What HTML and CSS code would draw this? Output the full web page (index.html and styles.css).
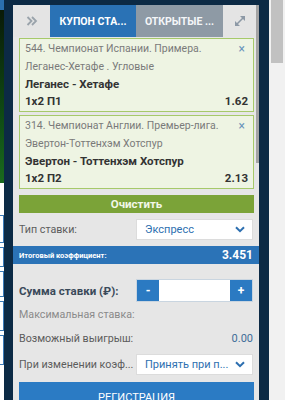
FILE: index.html
```html
<!DOCTYPE html>
<html lang="ru">
<head>
<meta charset="utf-8">
<title>Купон ставок</title>
<link rel="stylesheet" href="styles.css">
</head>
<body>
<div class="page">
  <div class="bg-strip">
    <div class="bg-blue"></div>
    <div class="bg-green"></div>
    <div class="bg-white">
      <div class="bg-box b1"></div>
      <div class="bg-box b2"></div>
      <div class="bg-box b3"></div>
      <div class="bg-box b4"></div>
      <div class="bg-box b5"></div>
    </div>
  </div>
  <div class="panel">
    <div class="panel-scroll"></div>
    <div class="tabs">
      <div class="tab tab-arrow">
        <svg width="12" height="12" viewBox="0 0 12 12"><path d="M1.5 2 L5.5 6 L1.5 10 M6 2 L10 6 L6 10" fill="none" stroke="#9aa3ab" stroke-width="1.8"/></svg>
      </div>
      <div class="tab tab-active">КУПОН СТА...</div>
      <div class="tab tab-grey">ОТКРЫТЫЕ ...</div>
      <div class="tab tab-expand">
        <svg width="14" height="14" viewBox="0 0 14 14"><path d="M3 11 L11 3" stroke="#8d99a6" stroke-width="1.6"/><path d="M2 7 L2 12 L7 12 Z M7 2 L12 2 L12 7 Z" fill="#8d99a6"/></svg>
      </div>
    </div>
    <div class="body">
      <div class="card">
        <div class="line muted"><span>544. Чемпионат Испании. Примера.</span><span class="close">×</span></div>
        <div class="line muted">Леганес-Хетафе . Угловые</div>
        <div class="line strong">Леганес - Хетафе</div>
        <div class="line strong"><span>1x2 П1</span><span>1.62</span></div>
      </div>
      <div class="card card-next">
        <div class="line muted"><span>314. Чемпионат Англии. Премьер-лига.</span><span class="close">×</span></div>
        <div class="line muted">Эвертон-Тоттенхэм Хотспур</div>
        <div class="line strong">Эвертон - Тоттенхэм Хотспур</div>
        <div class="line strong"><span>1x2 П2</span><span>2.13</span></div>
      </div>
      <div class="btn-clear">Очистить</div>
      <div class="row row-type">
        <span class="label">Тип ставки:</span>
        <div class="select"><span>Экспресс</span>
          <svg width="10" height="7" viewBox="0 0 10 7"><path d="M1 1.2 L5 5.2 L9 1.2" fill="none" stroke="#2d6fb0" stroke-width="2"/></svg>
        </div>
      </div>
      <div class="total">
        <span class="total-label">Итоговый коэффициент:</span>
        <span class="total-value">3.451</span>
      </div>
      <div class="row row-sum">
        <span class="label-bold">Сумма ставки (₽):</span>
        <div class="stepper">
          <span class="step">-</span>
          <span class="step-input"></span>
          <span class="step">+</span>
        </div>
      </div>
      <div class="row row-max"><span class="label light">Максимальная ставка:</span></div>
      <div class="row row-win"><span class="label">Возможный выигрыш:</span><span class="win">0.00</span></div>
      <div class="row row-change">
        <span class="label">При изменении коэф...</span>
        <div class="select"><span>Принять при п...</span>
          <svg width="10" height="7" viewBox="0 0 10 7"><path d="M1 1.2 L5 5.2 L9 1.2" fill="none" stroke="#2d6fb0" stroke-width="2"/></svg>
        </div>
      </div>
      <div class="btn-reg">РЕГИСТРАЦИЯ</div>
    </div>
  </div>
  <div class="navy-gap"></div>
  <div class="browser-scroll"><div class="thumb"></div></div>
</div>
</body>
</html>
```
FILE: styles.css
```css
* { box-sizing: border-box; }
html, body { margin: 0; padding: 0; }
body {
  width: 285px;
  height: 400px;
  overflow: hidden;
  background: #0c2a45;
  font-family: Roboto, "Liberation Sans", sans-serif;
}
.page {
  display: flex;
  height: 400px;
}
.bg-strip {
  width: 4px;
  flex: none;
  display: flex;
  flex-direction: column;
  margin-right: 9px;
}
.bg-blue { height: 10px; flex: none; background: #2b6fae; }
.bg-green {
  height: 173px;
  flex: none;
  background: linear-gradient(#0a1a08 0%, #0c2a0c 20%, #0f4a14 60%, #1a6a1e 100%);
}
.bg-white {
  flex: 1;
  background: #ffffff;
  display: flex;
  flex-direction: column;
  padding-top: 32px;
  gap: 4px;
}
.bg-box { border: 1px solid #3a7ab8; border-left: none; height: 28px; flex: none; }
.bg-box.b2 { height: 20px; }
.bg-box.b3 { height: 26px; }
.bg-box.b4 { height: 30px; }
.bg-box.b5 { height: 30px; }

.panel {
  position: relative;
  width: 246px;
  flex: none;
  margin-top: 5px;
  background: #e6e6e6;
  display: flex;
  flex-direction: column;
}
.panel-scroll {
  position: absolute;
  right: 0;
  top: 0;
  width: 3px;
  height: 158px;
  background: #a3a3a3;
  z-index: 2;
}
.tabs {
  display: flex;
  height: 32px;
  flex: none;
}
.tab {
  display: flex;
  align-items: center;
  justify-content: center;
  font-size: 10.5px;
  font-weight: 700;
  color: #fff;
  white-space: nowrap;
}
.tab-arrow { width: 37px; background: #e4e4e4; }
.tab-active { width: 86px; background: #2a72b5; }
.tab-grey { width: 87px; background: #8e9aa5; color: #f4f6f8; }
.tab-expand { flex: 1; background: #e4e4e4; padding-right: 3px; }

.body {
  display: flex;
  flex-direction: column;
  padding: 1px 5px 0 6px;
}
.body > * { flex: none; }
.card {
  height: 74px;
  border: 1px solid #a6c96a;
  background: #eef4e3;
  padding: 1px 5px 1px 5px;
  display: flex;
  flex-direction: column;
}
.card-next { margin-top: 3px; }
.line {
  display: flex;
  justify-content: space-between;
  align-items: center;
  height: 17.5px;
  flex: none;
  font-size: 10.5px;
  white-space: nowrap;
}
.muted { color: #7a7a7a; }
.strong { color: #333; font-weight: 700; font-size: 11.5px; }
.close { color: #6a95bb; font-size: 12px; padding-right: 3px; }

.btn-clear {
  margin-top: 6px;
  height: 18px;
  background: #7ba338;
  color: #f2f7e8;
  font-weight: 700;
  font-size: 11.5px;
  display: flex;
  align-items: center;
  justify-content: center;
}
.row {
  display: flex;
  align-items: center;
  justify-content: space-between;
}
.label { font-size: 10.7px; color: #5c5c5c; white-space: nowrap; }
.label.light { color: #8a8a8a; }
.label-bold { font-size: 11.5px; font-weight: 700; color: #3a4a5a; }
.select {
  width: 117px;
  height: 21px;
  background: #fff;
  border: 1px solid #dcdcdc;
  display: flex;
  align-items: center;
  justify-content: space-between;
  padding: 0 7px 0 8px;
  color: #2d6fb0;
  font-size: 11px;
  white-space: nowrap;
}
.row-type { margin-top: 6px; height: 21px; margin-right: 1px; }
.total {
  margin: 6px -5px 0 -6px;
  height: 18px;
  background: #2b73b7;
  display: flex;
  align-items: center;
  justify-content: space-between;
  padding: 0 6px 0 6px;
  color: #fff;
  font-weight: 700;
}
.total-label { font-size: 7.5px; }
.total-value { font-size: 12px; }
.row-sum { margin-top: 15px; height: 23px; margin-right: 1px; }
.stepper {
  width: 117px;
  height: 23px;
  border: 1px solid #c9d5e0;
  display: flex;
  background: #fff;
}
.step {
  width: 22px;
  background: #2b7ac2;
  color: #fff;
  font-size: 12px;
  font-weight: 700;
  display: flex;
  align-items: center;
  justify-content: center;
}
.step-input { flex: 1; background: #fff; }
.row-max { height: 24px; }
.row-win { height: 24px; }
.win { font-size: 11px; color: #3f6d98; padding-right: 1px; }
.row-change { height: 21px; margin-top: 4px; margin-right: 1px; }
.btn-reg {
  margin-top: 7px;
  height: 30px;
  background: #2b7bc4;
  color: #fff;
  font-size: 11px;
  display: flex;
  align-items: flex-start;
  justify-content: center;
  padding-top: 9px;
}

.navy-gap { width: 10px; flex: none; }
.browser-scroll {
  width: 16px;
  flex: none;
  background: #f1f1f1;
  padding: 0 2px;
}
.thumb { height: 63px; background: #c1c1c1; }
```
